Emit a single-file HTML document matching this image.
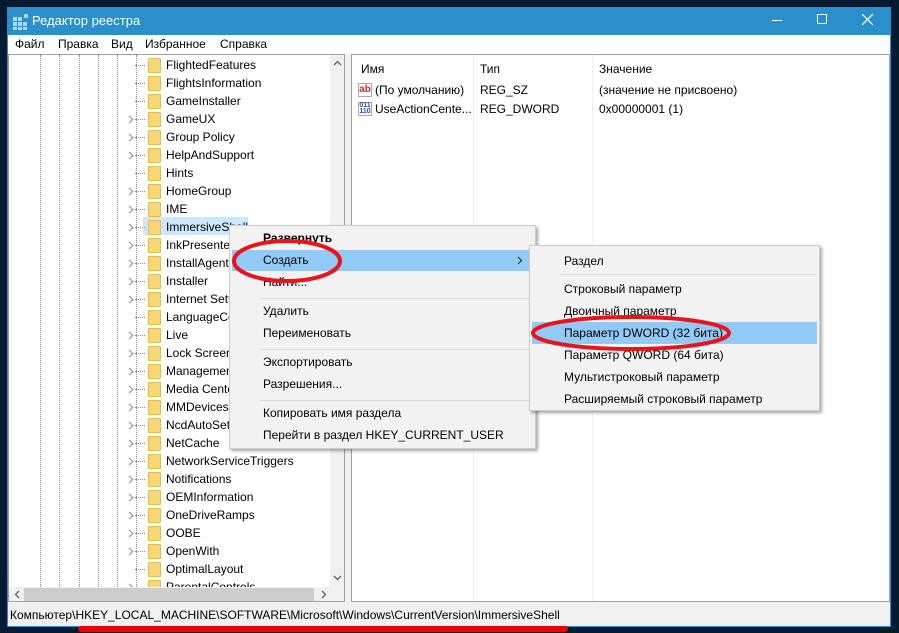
<!DOCTYPE html>
<html><head><meta charset="utf-8"><style>
*{margin:0;padding:0;box-sizing:border-box}
body{width:899px;height:633px;background:#061a30;position:relative;overflow:hidden;font-family:"Liberation Sans","DejaVu Sans",sans-serif;font-size:12px;color:#000}
.a{position:absolute}
.win{left:7px;top:7px;width:884px;height:620px;background:#f0f0f0;border:1px solid #2b8fcb}
.title{left:7px;top:7px;width:884px;height:28px;background:#2b8fcb;color:#fff;font-size:13px}
.menu{left:8px;top:35px;width:882px;height:19px;background:#fff}
.menu span{position:absolute;top:2px}
.lp{left:8px;top:54px;width:337px;height:548px;background:#fff;border:1px solid #a0a0a0;overflow:hidden}
.rp{left:351px;top:54px;width:539px;height:548px;background:#fff;border:1px solid #a0a0a0}
.row{position:absolute;left:0;height:18px;width:330px}
.row .f{position:absolute;left:139px;top:2px;width:13px;height:15px;background:#f8d775;border:1px solid #e6bc50;border-radius:1px}
.row .t{position:absolute;left:157px;top:2px;white-space:nowrap}
.row .c{position:absolute;left:119px;top:5px;width:7px;height:9px}
.row .d{position:absolute;left:126px;top:9px;width:10px;border-top:1px dotted #888}
.vl{position:absolute;top:0;height:548px;border-left:1px dotted #888}
.cm{background:#f2f2f2;border:1px solid #ccc;box-shadow:2px 2px 3px rgba(0,0,0,.35)}
.mi{position:absolute;white-space:nowrap}
.sep{position:absolute;height:1px;background:#d7d7d7}
.hl{position:absolute;background:#91c9f7}
</style></head><body>
<svg width="0" height="0" style="position:absolute"><defs><symbol id="ch" viewBox="0 0 7 9"><path d="M1 1L5 4.5L1 8" fill="none" stroke="#a6a6a6" stroke-width="1.4"/></symbol></defs></svg>
<div class="a win"></div>
<div class="a title">
 <svg class="a" style="left:6px;top:7px" width="16" height="16"><g fill="#a8d8ff"><rect x="0" y="3" width="4" height="4"/><rect x="5" y="3" width="4" height="4"/><rect x="0" y="8" width="4" height="4"/><rect x="5" y="8" width="4" height="4"/><rect x="10" y="8" width="4" height="4"/><rect x="0" y="13" width="4" height="3"/><rect x="5" y="13" width="4" height="3"/><rect x="10" y="13" width="4" height="3"/><rect x="11" y="0" width="4" height="4"/></g></svg>
 <span class="a" style="left:25px;top:6px">Редактор реестра</span>
 <div class="a" style="left:765px;top:13px;width:10px;height:1px;background:#fff"></div>
 <div class="a" style="left:810px;top:7px;width:10px;height:10px;border:1px solid #fff"></div>
 <svg class="a" style="left:855px;top:7px" width="11" height="11"><path d="M0 0L11 11M11 0L0 11" stroke="#fff" stroke-width="1.2"/></svg>
</div>
<div class="a menu"><span style="left:7px">Файл</span><span style="left:50px">Правка</span><span style="left:103px">Вид</span><span style="left:137px">Избранное</span><span style="left:212px">Справка</span></div>

<div class="a lp">
 <div class="vl" style="left:31px"></div><div class="vl" style="left:50px"></div><div class="vl" style="left:70px"></div><div class="vl" style="left:89px"></div><div class="vl" style="left:108px"></div><div class="vl" style="left:127px"></div>
 <div class="a" style="left:134px;top:162px;width:105px;height:18px;background:#cce8ff"></div>
 <div class="row" style="top:1px"><i class="d"></i><i class="f"></i><span class="t">FlightedFeatures</span></div>
 <div class="row" style="top:19px"><i class="d"></i><i class="f"></i><span class="t">FlightsInformation</span></div>
 <div class="row" style="top:37px"><i class="d"></i><i class="f"></i><span class="t">GameInstaller</span></div>
 <div class="row" style="top:55px"><svg class="c"><use href="#ch"/></svg><i class="d"></i><i class="f"></i><span class="t">GameUX</span></div>
 <div class="row" style="top:73px"><svg class="c"><use href="#ch"/></svg><i class="d"></i><i class="f"></i><span class="t">Group Policy</span></div>
 <div class="row" style="top:91px"><svg class="c"><use href="#ch"/></svg><i class="d"></i><i class="f"></i><span class="t">HelpAndSupport</span></div>
 <div class="row" style="top:109px"><i class="d"></i><i class="f"></i><span class="t">Hints</span></div>
 <div class="row" style="top:127px"><svg class="c"><use href="#ch"/></svg><i class="d"></i><i class="f"></i><span class="t">HomeGroup</span></div>
 <div class="row" style="top:145px"><svg class="c"><use href="#ch"/></svg><i class="d"></i><i class="f"></i><span class="t">IME</span></div>
 <div class="row" style="top:163px"><svg class="c"><use href="#ch"/></svg><i class="d"></i><i class="f"></i><span class="t">ImmersiveShell</span></div>
 <div class="row" style="top:181px"><svg class="c"><use href="#ch"/></svg><i class="d"></i><i class="f"></i><span class="t">InkPresenter</span></div>
 <div class="row" style="top:199px"><svg class="c"><use href="#ch"/></svg><i class="d"></i><i class="f"></i><span class="t">InstallAgent</span></div>
 <div class="row" style="top:217px"><svg class="c"><use href="#ch"/></svg><i class="d"></i><i class="f"></i><span class="t">Installer</span></div>
 <div class="row" style="top:235px"><svg class="c"><use href="#ch"/></svg><i class="d"></i><i class="f"></i><span class="t">Internet Settings</span></div>
 <div class="row" style="top:253px"><i class="d"></i><i class="f"></i><span class="t">LanguageComponents</span></div>
 <div class="row" style="top:271px"><svg class="c"><use href="#ch"/></svg><i class="d"></i><i class="f"></i><span class="t">Live</span></div>
 <div class="row" style="top:289px"><svg class="c"><use href="#ch"/></svg><i class="d"></i><i class="f"></i><span class="t">Lock Screen</span></div>
 <div class="row" style="top:307px"><svg class="c"><use href="#ch"/></svg><i class="d"></i><i class="f"></i><span class="t">Management</span></div>
 <div class="row" style="top:325px"><svg class="c"><use href="#ch"/></svg><i class="d"></i><i class="f"></i><span class="t">Media Center</span></div>
 <div class="row" style="top:343px"><svg class="c"><use href="#ch"/></svg><i class="d"></i><i class="f"></i><span class="t">MMDevices</span></div>
 <div class="row" style="top:361px"><svg class="c"><use href="#ch"/></svg><i class="d"></i><i class="f"></i><span class="t">NcdAutoSetup</span></div>
 <div class="row" style="top:379px"><svg class="c"><use href="#ch"/></svg><i class="d"></i><i class="f"></i><span class="t">NetCache</span></div>
 <div class="row" style="top:397px"><svg class="c"><use href="#ch"/></svg><i class="d"></i><i class="f"></i><span class="t">NetworkServiceTriggers</span></div>
 <div class="row" style="top:415px"><svg class="c"><use href="#ch"/></svg><i class="d"></i><i class="f"></i><span class="t">Notifications</span></div>
 <div class="row" style="top:433px"><svg class="c"><use href="#ch"/></svg><i class="d"></i><i class="f"></i><span class="t">OEMInformation</span></div>
 <div class="row" style="top:451px"><svg class="c"><use href="#ch"/></svg><i class="d"></i><i class="f"></i><span class="t">OneDriveRamps</span></div>
 <div class="row" style="top:469px"><svg class="c"><use href="#ch"/></svg><i class="d"></i><i class="f"></i><span class="t">OOBE</span></div>
 <div class="row" style="top:487px"><svg class="c"><use href="#ch"/></svg><i class="d"></i><i class="f"></i><span class="t">OpenWith</span></div>
 <div class="row" style="top:505px"><i class="d"></i><i class="f"></i><span class="t">OptimalLayout</span></div>
 <div class="row" style="top:523px"><svg class="c"><use href="#ch"/></svg><i class="d"></i><i class="f"></i><span class="t">ParentalControls</span></div>
 <div class="a" style="left:321px;top:0;width:15px;height:532px;background:#f0f0f0">
  <svg class="a" style="left:3px;top:5px" width="9" height="6"><path d="M1 5L4.5 1.5L8 5" fill="none" stroke="#606060" stroke-width="1.3"/></svg>
  <svg class="a" style="left:3px;top:520px" width="9" height="6"><path d="M1 1L4.5 4.5L8 1" fill="none" stroke="#606060" stroke-width="1.3"/></svg>
 </div>
 <div class="a" style="left:0;top:532px;width:336px;height:15px;background:#f0f0f0"><div class="a" style="left:15px;top:1px;width:290px;height:13px;background:#cdcdcd"></div>
  <svg class="a" style="left:5px;top:3px" width="6" height="9"><path d="M5 1L1.5 4.5L5 8" fill="none" stroke="#606060" stroke-width="1.3"/></svg>
  <svg class="a" style="left:312px;top:3px" width="6" height="9"><path d="M1 1L4.5 4.5L1 8" fill="none" stroke="#606060" stroke-width="1.3"/></svg>
 </div>
</div>

<div class="a rp">
 <div class="a" style="left:121px;top:0;width:1px;height:546px;background:#f0f0f0"></div>
 <div class="a" style="left:240px;top:0;width:1px;height:546px;background:#f0f0f0"></div>
 <span class="a" style="left:9px;top:7px">Имя</span><span class="a" style="left:128px;top:7px">Тип</span><span class="a" style="left:247px;top:7px">Значение</span>
 <div class="a" style="left:6px;top:28px;width:14px;height:14px;border:1px solid #aaa;background:#fff;color:#d2301c;font-size:10px;font-weight:bold;line-height:11px;text-align:center">ab</div>
 <span class="a" style="left:23px;top:28px">(По умолчанию)</span><span class="a" style="left:128px;top:28px">REG_SZ</span><span class="a" style="left:247px;top:28px">(значение не присвоено)</span>
 <div class="a" style="left:6px;top:47px;width:14px;height:14px;border:1px solid #aaa;background:#fff;color:#1f4fb8;font-size:7px;font-weight:bold;line-height:6px;text-align:center">011<br>110</div>
 <span class="a" style="left:23px;top:47px">UseActionCente...</span><span class="a" style="left:128px;top:47px">REG_DWORD</span><span class="a" style="left:247px;top:47px">0x00000001 (1)</span>
</div>

<div class="a" style="left:8px;top:603px;width:882px;height:23px;background:#f0f0f0"><span class="a" style="left:2px;top:5px">Компьютер\HKEY_LOCAL_MACHINE\SOFTWARE\Microsoft\Windows\CurrentVersion\ImmersiveShell</span></div>
<div class="a" style="left:78px;top:626px;width:490px;height:6px;background:#e00;border-radius:3px"></div>

<div class="a cm" style="left:229px;top:225px;width:307px;height:224px">
 <div class="hl" style="left:2px;top:24px;width:302px;height:21px"></div>
 <span class="mi" style="left:33px;top:5px;font-weight:bold">Развернуть</span>
 <span class="mi" style="left:33px;top:27px">Создать</span>
 <svg class="a" style="left:287px;top:30px" width="6" height="9"><path d="M1 1L4.5 4.5L1 8" fill="none" stroke="#333" stroke-width="1.2"/></svg>
 <span class="mi" style="left:33px;top:49px">Найти...</span>
 <div class="sep" style="left:30px;top:72px;width:272px"></div>
 <span class="mi" style="left:33px;top:78px">Удалить</span>
 <span class="mi" style="left:33px;top:100px">Переименовать</span>
 <div class="sep" style="left:30px;top:123px;width:272px"></div>
 <span class="mi" style="left:33px;top:129px">Экспортировать</span>
 <span class="mi" style="left:33px;top:151px">Разрешения...</span>
 <div class="sep" style="left:30px;top:174px;width:272px"></div>
 <span class="mi" style="left:33px;top:180px">Копировать имя раздела</span>
 <span class="mi" style="left:33px;top:202px">Перейти в раздел HKEY_CURRENT_USER</span>
</div>

<div class="a cm" style="left:529px;top:245px;width:291px;height:166px">
 <div class="hl" style="left:2px;top:76px;width:285px;height:22px"></div>
 <span class="mi" style="left:34px;top:8px">Раздел</span>
 <div class="sep" style="left:30px;top:28px;width:256px"></div>
 <span class="mi" style="left:34px;top:36px">Строковый параметр</span>
 <span class="mi" style="left:34px;top:58px">Двоичный параметр</span>
 <span class="mi" style="left:34px;top:80px">Параметр DWORD (32 бита)</span>
 <span class="mi" style="left:34px;top:102px">Параметр QWORD (64 бита)</span>
 <span class="mi" style="left:34px;top:124px">Мультистроковый параметр</span>
 <span class="mi" style="left:34px;top:146px">Расширяемый строковый параметр</span>
</div>

<svg class="a" style="left:0;top:0" width="899" height="633">
 <ellipse cx="287" cy="261" rx="53" ry="20" fill="none" stroke="#e8141c" stroke-width="4"/>
 <ellipse cx="631" cy="333" rx="98" ry="16" fill="none" stroke="#e8141c" stroke-width="4"/>
</svg>
</body></html>
